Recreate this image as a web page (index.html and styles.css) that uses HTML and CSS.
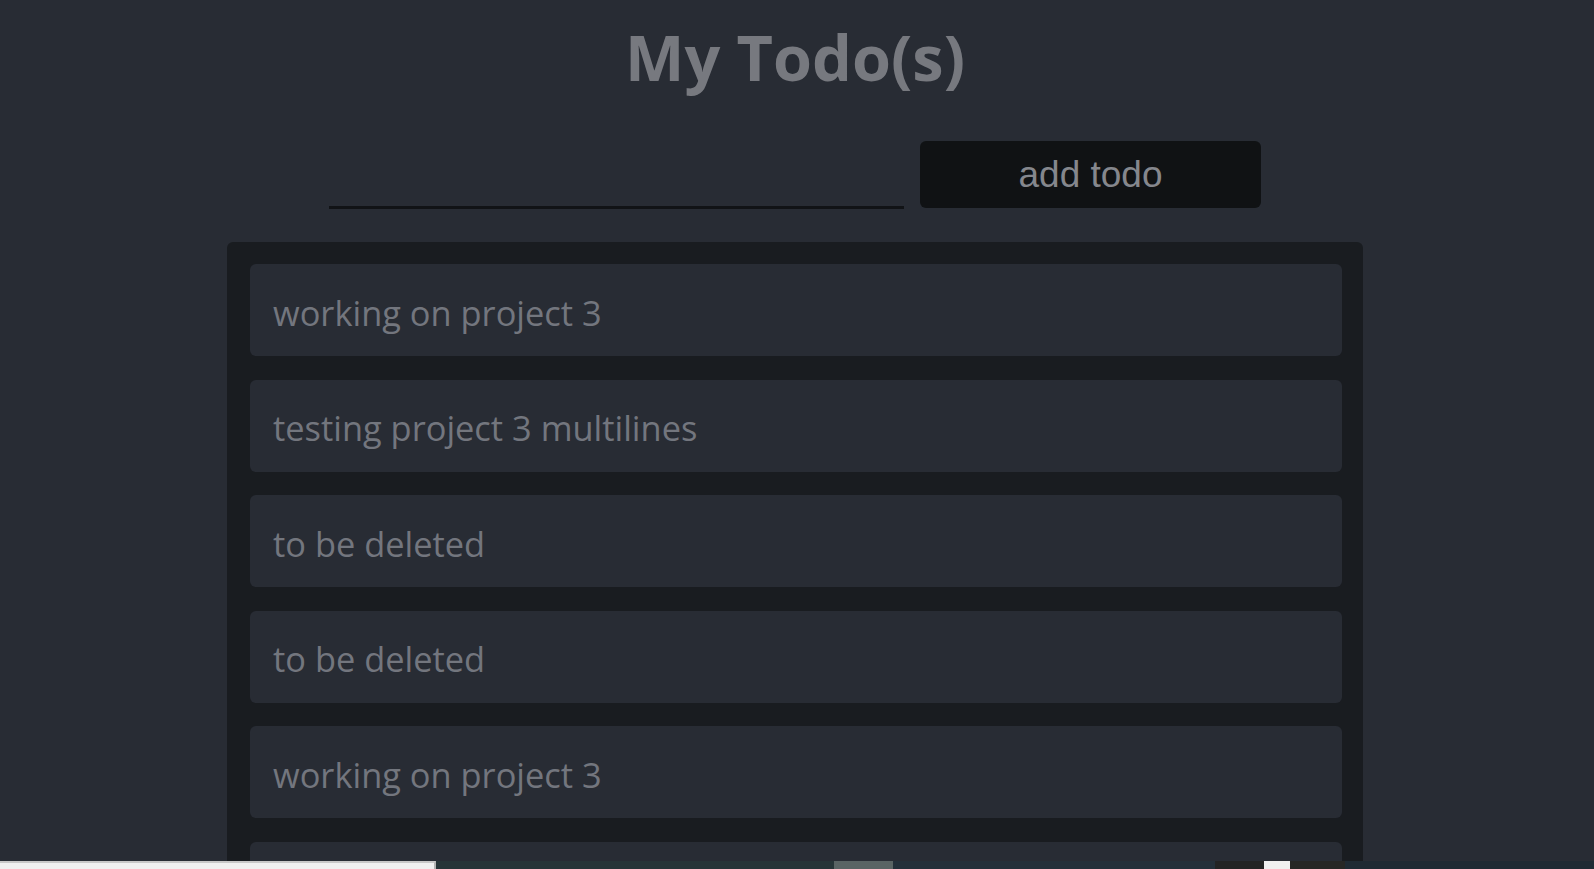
FILE: index.html
```html
<!DOCTYPE html>
<html lang="en">
<head>
<meta charset="utf-8">
<title>My Todo(s)</title>
<link rel="stylesheet" href="styles.css">
</head>
<body>
<div class="app">
  <h1 class="title">My Todo(s)</h1>
  <form class="todo-form">
    <input class="todo-input" type="text" aria-label="todo">
    <button class="todo-button" type="button">add todo</button>
  </form>
  <ul class="todo-list">
    <li class="todo-item">working on project 3</li>
    <li class="todo-item">testing project 3 multilines</li>
    <li class="todo-item">to be deleted</li>
    <li class="todo-item">to be deleted</li>
    <li class="todo-item">working on project 3</li>
    <li class="todo-item">working on project 3</li>
  </ul>
</div>
<div class="strip">
  <span class="seg seg-light"></span>
  <span class="seg seg-teal1"></span>
  <span class="seg seg-gray"></span>
  <span class="seg seg-teal2"></span>
  <span class="seg seg-dark"></span>
  <span class="seg seg-white"></span>
  <span class="seg seg-dark2"></span>
  <span class="seg seg-teal3"></span>
</div>
</body>
</html>
```
FILE: styles.css
```css
html, body {
  margin: 0;
  padding: 0;
  background: #282c34;
  overflow: hidden;
  height: 100%;
}
.app {
  width: calc(100% - 4px);
  display: flex;
  flex-direction: column;
  align-items: center;
  font-family: "Open Sans", "Noto Sans", sans-serif;
}
.title {
  margin: 14px 0 0 0;
  font-size: 63px;
  font-weight: 700;
  line-height: 86px;
  color: #77797f;
}
.todo-form {
  margin-top: 41px;
  display: flex;
  align-items: flex-end;
  gap: 16px;
}
.todo-input {
  width: 575px;
  height: 40px;
  box-sizing: border-box;
  background: transparent;
  border: none;
  border-bottom: 3px solid #111316;
  outline: none;
  padding: 0;
  margin-bottom: -1px;
}
.todo-button {
  width: 341px;
  height: 67px;
  border: none;
  border-radius: 6px;
  background: #101214;
  color: #85878d;
  font-family: "Liberation Sans", Arial, sans-serif;
  font-size: 37px;
  padding: 0;
}
.todo-list {
  list-style: none;
  margin: 34px 0 0 0;
  width: 1136px;
  box-sizing: border-box;
  padding: 22px 21px 0 23px;
  background: #191c20;
  border-radius: 6px;
  display: flex;
  flex-direction: column;
  gap: 23.5px;
}
.todo-item {
  height: 92px;
  box-sizing: border-box;
  display: flex;
  align-items: center;
  padding: 4px 0 0 23px;
  background: #282c34;
  border-radius: 6px;
  color: #73767e;
  font-size: 34.4px;
  flex-shrink: 0;
}
.strip {
  position: fixed;
  left: 0;
  right: 0;
  bottom: 0;
  height: 8px;
  display: flex;
}
.seg { height: 100%; display: block; }
.seg-light { width: 436px; background: #f0f0f0; border-top: 2px solid #c8c8c8; border-right: 2px solid #b4b4b4; box-sizing: border-box; }
.seg-teal1 { width: 398px; background: #273538; }
.seg-gray { width: 59px; background: #5a6464; }
.seg-teal2 { width: 322px; background: #24303a; }
.seg-dark { width: 49px; background: #232424; }
.seg-white { width: 26px; background: #f0f0f0; }
.seg-dark2 { width: 55px; background: #272725; }
.seg-teal3 { flex: 1; background: #1f2a33; }
```
